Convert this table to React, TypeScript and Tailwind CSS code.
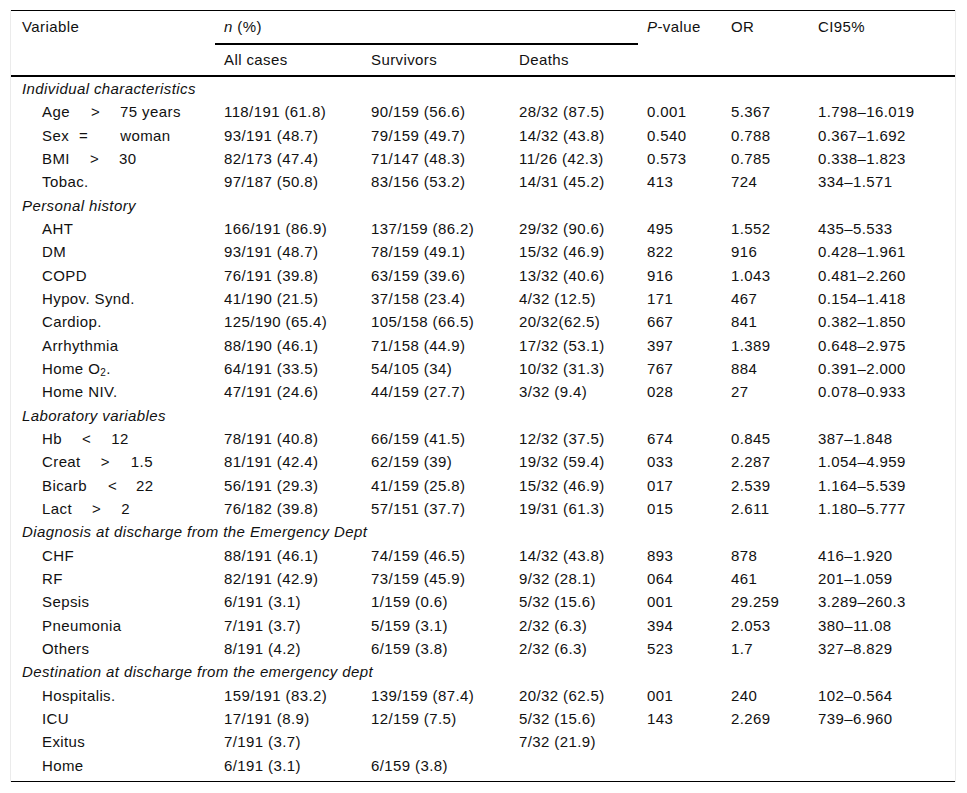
import React from "react";

type Item = {
  label: React.ReactNode;
  values: string[];
};

type Section = {
  title: string;
  items: Item[];
};

// name + operator + threshold, with the wide gaps the printed table uses
function Cond({
  name,
  op,
  value,
  opGap = "ml-[20px]",
  valueGap = "ml-[20px]",
}: {
  name: string;
  op: string;
  value: string;
  opGap?: string;
  valueGap?: string;
}) {
  return (
    <>
      <span>{name}</span>
      <span className={opGap}>{op}</span>
      <span className={valueGap}>{value}</span>
    </>
  );
}

const sections: Section[] = [
  {
    title: "Individual characteristics",
    items: [
      {
        label: <Cond name="Age" op=">" value="75 years" opGap="ml-[21px]" />,
        values: ["118/191 (61.8)", "90/159 (56.6)", "28/32 (87.5)", "0.001", "5.367", "1.798–16.019"],
      },
      {
        label: <Cond name="Sex" op="=" value="woman" opGap="ml-[10px]" valueGap="ml-[32px]" />,
        values: ["93/191 (48.7)", "79/159 (49.7)", "14/32 (43.8)", "0.540", "0.788", "0.367–1.692"],
      },
      {
        label: <Cond name="BMI" op=">" value="30" />,
        values: ["82/173 (47.4)", "71/147 (48.3)", "11/26 (42.3)", "0.573", "0.785", "0.338–1.823"],
      },
      {
        label: "Tobac.",
        values: ["97/187 (50.8)", "83/156 (53.2)", "14/31 (45.2)", "413", "724", "334–1.571"],
      },
    ],
  },
  {
    title: "Personal history",
    items: [
      { label: "AHT", values: ["166/191 (86.9)", "137/159 (86.2)", "29/32 (90.6)", "495", "1.552", "435–5.533"] },
      { label: "DM", values: ["93/191 (48.7)", "78/159 (49.1)", "15/32 (46.9)", "822", "916", "0.428–1.961"] },
      { label: "COPD", values: ["76/191 (39.8)", "63/159 (39.6)", "13/32 (40.6)", "916", "1.043", "0.481–2.260"] },
      { label: "Hypov. Synd.", values: ["41/190 (21.5)", "37/158 (23.4)", "4/32 (12.5)", "171", "467", "0.154–1.418"] },
      { label: "Cardiop.", values: ["125/190 (65.4)", "105/158 (66.5)", "20/32(62.5)", "667", "841", "0.382–1.850"] },
      { label: "Arrhythmia", values: ["88/190 (46.1)", "71/158 (44.9)", "17/32 (53.1)", "397", "1.389", "0.648–2.975"] },
      {
        label: (
          <>
            Home O<sub className="text-[10px]">2</sub>.
          </>
        ),
        values: ["64/191 (33.5)", "54/105 (34)", "10/32 (31.3)", "767", "884", "0.391–2.000"],
      },
      { label: "Home NIV.", values: ["47/191 (24.6)", "44/159 (27.7)", "3/32 (9.4)", "028", "27", "0.078–0.933"] },
    ],
  },
  {
    title: "Laboratory variables",
    items: [
      {
        label: <Cond name="Hb" op="<" value="12" />,
        values: ["78/191 (40.8)", "66/159 (41.5)", "12/32 (37.5)", "674", "0.845", "387–1.848"],
      },
      {
        label: <Cond name="Creat" op=">" value="1.5" valueGap="ml-[21px]" />,
        values: ["81/191 (42.4)", "62/159 (39)", "19/32 (59.4)", "033", "2.287", "1.054–4.959"],
      },
      {
        label: <Cond name="Bicarb" op="<" value="22" opGap="ml-[21px]" valueGap="ml-[19px]" />,
        values: ["56/191 (29.3)", "41/159 (25.8)", "15/32 (46.9)", "017", "2.539", "1.164–5.539"],
      },
      {
        label: <Cond name="Lact" op=">" value="2" />,
        values: ["76/182 (39.8)", "57/151 (37.7)", "19/31 (61.3)", "015", "2.611", "1.180–5.777"],
      },
    ],
  },
  {
    title: "Diagnosis at discharge from the Emergency Dept",
    items: [
      { label: "CHF", values: ["88/191 (46.1)", "74/159 (46.5)", "14/32 (43.8)", "893", "878", "416–1.920"] },
      { label: "RF", values: ["82/191 (42.9)", "73/159 (45.9)", "9/32 (28.1)", "064", "461", "201–1.059"] },
      { label: "Sepsis", values: ["6/191 (3.1)", "1/159 (0.6)", "5/32 (15.6)", "001", "29.259", "3.289–260.3"] },
      { label: "Pneumonia", values: ["7/191 (3.7)", "5/159 (3.1)", "2/32 (6.3)", "394", "2.053", "380–11.08"] },
      { label: "Others", values: ["8/191 (4.2)", "6/159 (3.8)", "2/32 (6.3)", "523", "1.7", "327–8.829"] },
    ],
  },
  {
    title: "Destination at discharge from the emergency dept",
    items: [
      { label: "Hospitalis.", values: ["159/191 (83.2)", "139/159 (87.4)", "20/32 (62.5)", "001", "240", "102–0.564"] },
      { label: "ICU", values: ["17/191 (8.9)", "12/159 (7.5)", "5/32 (15.6)", "143", "2.269", "739–6.960"] },
      { label: "Exitus", values: ["7/191 (3.7)", "", "7/32 (21.9)", "", "", ""] },
      { label: "Home", values: ["6/191 (3.1)", "6/159 (3.8)", "", "", "", ""] },
    ],
  },
];

const cols = "grid grid-cols-[204px_147px_148px_128px_84px_87px_148px]";

export default function App() {
  return (
    <div className="min-h-screen bg-white pl-[10px] pt-[10px]">
      <div className="w-[946px] border-x border-[#ebebeb] font-['Liberation_Sans',Arial,sans-serif] text-[15px] tracking-[0.4px] text-[#111]">
        {/* header */}
        <div className={`${cols} grid-rows-[34px_30px] border-t border-b-2 border-black`}>
          <div className="row-span-2 flex h-[33px] items-center pl-[11px]">Variable</div>
          <div className="col-span-3 flex h-[34px] items-center border-b-2 border-black pl-[9px]">
            <span>
              <i>n</i> (%)
            </span>
          </div>
          <div className="row-span-2 flex h-[33px] items-center pl-[9px]">
            <span>
              <i>P</i>-value
            </span>
          </div>
          <div className="row-span-2 flex h-[33px] items-center pl-[9px]">OR</div>
          <div className="row-span-2 flex h-[33px] items-center pl-[9px]">CI95%</div>
          <div className="col-start-2 flex items-center pl-[9px]">All cases</div>
          <div className="flex items-center pl-[9px]">Survivors</div>
          <div className="flex items-center pl-[9px]">Deaths</div>
        </div>

        {/* body */}
        <div className="border-b border-black pb-[4px] leading-[23.33px]">
          {sections.map((section) => (
            <div key={section.title}>
              <div className="h-[23.33px] whitespace-nowrap pl-[11px] italic">{section.title}</div>
              {section.items.map((item, i) => (
                <div key={i} className={`${cols} h-[23.33px]`}>
                  <div className="whitespace-nowrap pl-[31px]">{item.label}</div>
                  {item.values.map((v, j) => (
                    <div key={j} className="whitespace-nowrap pl-[9px]">
                      {v}
                    </div>
                  ))}
                </div>
              ))}
            </div>
          ))}
        </div>
      </div>
    </div>
  );
}
